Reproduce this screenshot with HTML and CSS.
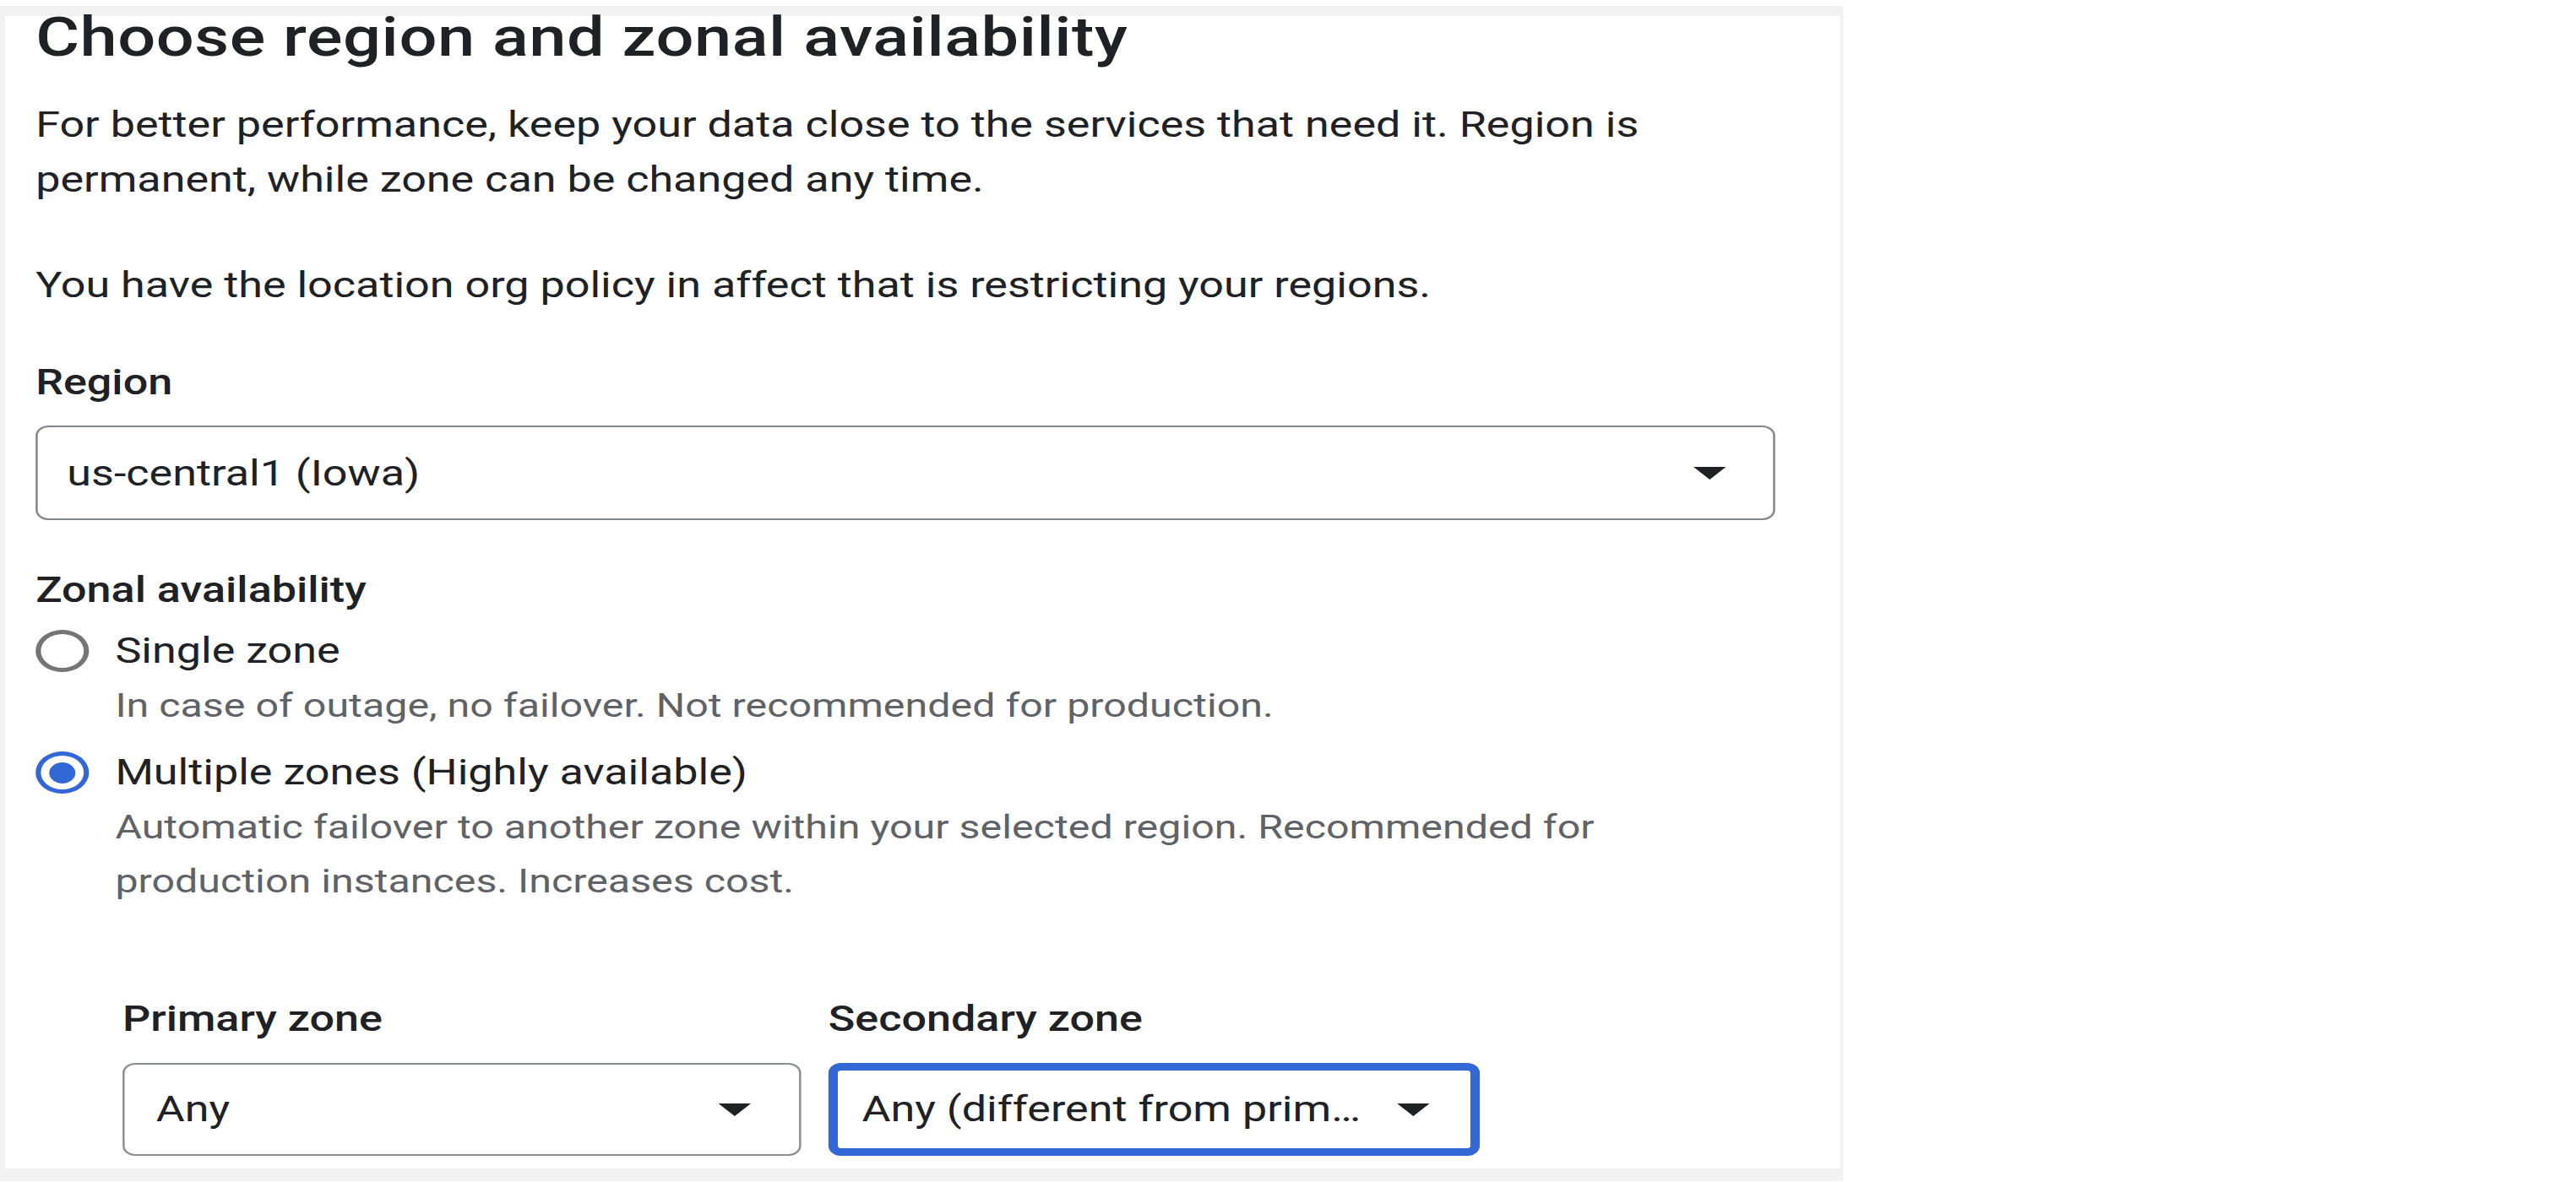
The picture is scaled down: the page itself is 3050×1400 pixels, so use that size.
FILE: index.html
```html
<!DOCTYPE html>
<html lang="en">
<head>
<meta charset="utf-8">
<title>Choose region and zonal availability</title>
<link rel="stylesheet" href="styles.css">
</head>
<body>
<div class="stage">
  <div class="frame">
    <section class="panel">
      <h1 class="title">Choose region and zonal availability</h1>
      <p class="intro">For better performance, keep your data close to the services that need it. Region is permanent, while zone can be changed any time.</p>
      <p class="intro">You have the location org policy in affect that is restricting your regions.</p>

      <div class="region-field">
        <div class="field-label">Region</div>
        <div class="select select-region">
          <span class="select-value">us-central1 (Iowa)</span>
          <svg class="arrow" viewBox="0 0 10 5" preserveAspectRatio="none" aria-hidden="true"><path d="M0 0H10L5 5Z"/></svg>
        </div>
      </div>

      <div class="zonal">
        <div class="field-label">Zonal availability</div>
        <div class="radio-row">
          <span class="radio"></span>
          <span class="radio-label">Single zone</span>
        </div>
        <p class="radio-desc">In case of outage, no failover. Not recommended for production.</p>
        <div class="radio-row is-checked">
          <span class="radio"></span>
          <span class="radio-label">Multiple zones (Highly available)</span>
        </div>
        <p class="radio-desc">Automatic failover to another zone within your selected region. Recommended for production instances. Increases cost.</p>
      </div>

      <div class="zones">
        <div class="zone zone-primary">
          <div class="field-label">Primary zone</div>
          <div class="select select-zone">
            <span class="select-value">Any</span>
            <svg class="arrow" viewBox="0 0 10 5" preserveAspectRatio="none" aria-hidden="true"><path d="M0 0H10L5 5Z"/></svg>
          </div>
        </div>
        <div class="zone zone-secondary">
          <div class="field-label">Secondary zone</div>
          <div class="select select-zone select-focused">
            <span class="select-value">Any (different from primary zone)</span>
            <svg class="arrow" viewBox="0 0 10 5" preserveAspectRatio="none" aria-hidden="true"><path d="M0 0H10L5 5Z"/></svg>
          </div>
        </div>
      </div>
    </section>
  </div>
</div>
</body>
</html>
```

FILE: styles.css
```css
* { box-sizing: border-box; }

body {
  margin: 0;
  background: #ffffff;
  font-family: Roboto, "Liberation Sans", Arial, sans-serif;
  color: #202124;
}

.stage {
  width: 1760px;
  padding-top: 7px;
  transform: scaleX(1.24);
  transform-origin: 0 0;
}

.frame {
  background: #f2f2f2;
  padding: 12px 3px 15px 5px;
}

.panel {
  background: #ffffff;
  padding: 2px 62px 15px 29px;
}

.title {
  margin: 0;
  font-size: 64px;
  font-weight: 500;
  line-height: 48px;
  letter-spacing: 0.45px;
  color: #202124;
}

.intro {
  margin: 46px 0 0;
  font-size: 42px;
  line-height: 65px;
}

.intro + .intro { margin-top: 60px; }

.field-label {
  font-size: 42px;
  font-weight: 500;
  line-height: 65px;
}

.region-field { margin-top: 50px; }

.select {
  display: flex;
  align-items: center;
  height: 112px;
  margin-top: 19px;
  border: 2px solid #80868b;
  border-radius: 12px;
  padding: 0 45px 0 28px;
  font-size: 42px;
  line-height: 50px;
  background: #fff;
}

.select-region .select-value { padding-top: 2px; }

.select-value {
  flex: 1;
  min-width: 0;
  white-space: nowrap;
  overflow: hidden;
  text-overflow: ellipsis;
}

.arrow {
  flex: none;
  width: 31px;
  height: 15px;
  fill: #202124;
}

.zonal { margin-top: 50px; }

.radio-row {
  display: flex;
  align-items: center;
  gap: 25px;
  height: 50px;
  margin-top: 15px;
  font-size: 42px;
  line-height: 50px;
}

.radio {
  flex: none;
  width: 51px;
  height: 50px;
  border: 5px solid #757575;
  border-radius: 50%;
  display: flex;
  align-items: center;
  justify-content: center;
}

.radio-row.is-checked .radio { border-color: #3367d6; }

.radio-row.is-checked .radio::after {
  content: "";
  width: 25px;
  height: 25px;
  border-radius: 50%;
  background: #3367d6;
}

.radio-desc {
  margin: 8px 0 0 76px;
  max-width: 1480px;
  font-size: 39px;
  line-height: 64px;
  color: #5f6368;
}

.radio-desc + .radio-row { margin-top: 22px; }

.zones {
  display: flex;
  gap: 26px;
  margin: 98px 0 0 83px;
}

.zone-primary { width: 648px; }
.zone-secondary { width: 622px; }

.select-zone {
  height: 110px;
  margin-top: 20px;
  padding: 0 46px 0 30px;
  border-color: #8a8e93;
}

.select-focused {
  border: 9px solid #3367d6;
  padding: 0 39px 0 23px;
}

.select-focused .arrow { margin-left: 30px; }
```
